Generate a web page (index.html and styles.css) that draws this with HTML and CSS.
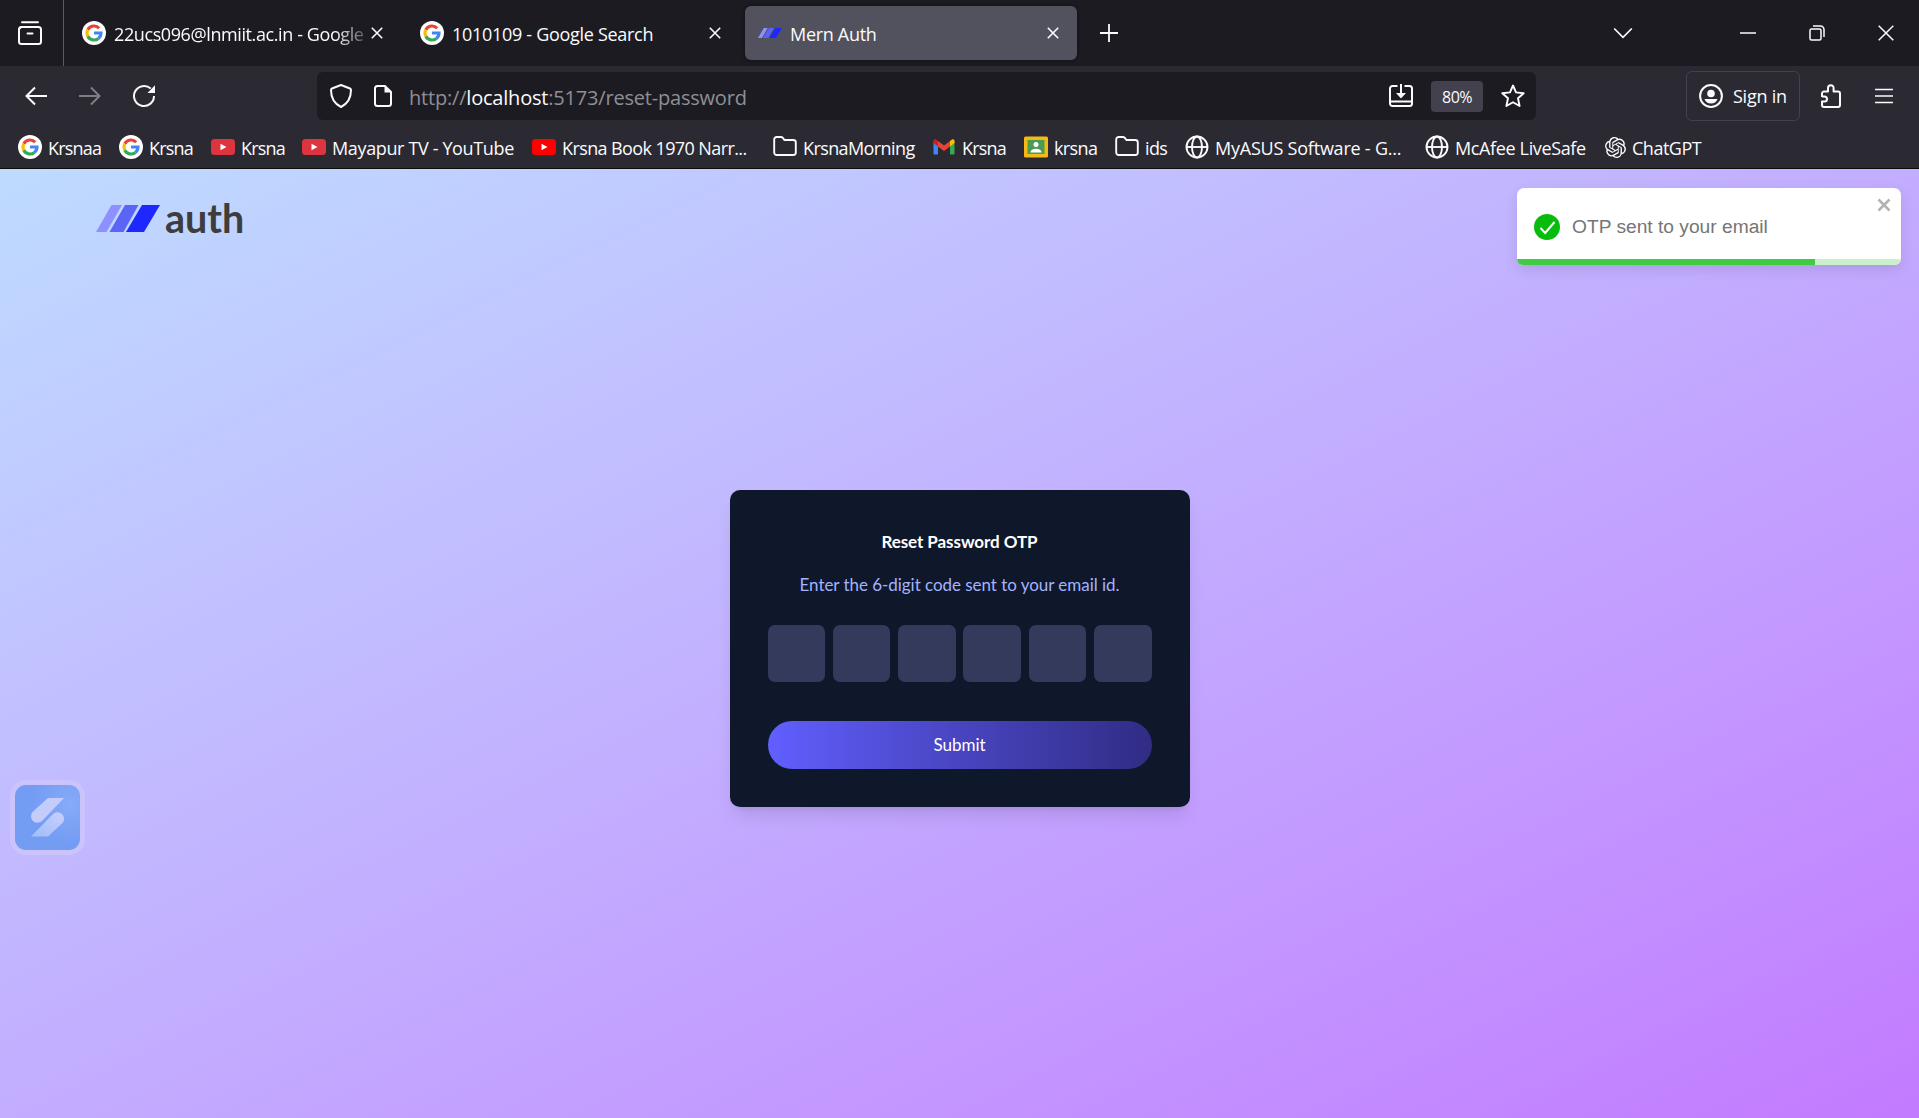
FILE: index.html
```html
<!DOCTYPE html>
<html lang="en">
<head>
<meta charset="utf-8">
<title>Mern Auth</title>
<link rel="stylesheet" href="styles.css">
</head>
<body>
<svg class="defs" aria-hidden="true">
  <symbol id="google" viewBox="0 0 24 24"><circle cx="12" cy="12" r="12" fill="#fff"/><g fill="none" stroke-width="3.1"><path d="M17.2 7.2A7 7 0 0 0 5.8 8.8" stroke="#ea4335"/><path d="M5.8 8.8a7 7 0 0 0 0 6.4" stroke="#fbbc05"/><path d="M5.8 15.2a7 7 0 0 0 10.6 2.3" stroke="#34a853"/><path d="M16.4 17.5A7 7 0 0 0 19 12h-7" stroke="#4285f4"/></g></symbol>
  <symbol id="youtube" viewBox="0 0 24 24"><rect y="4" width="24" height="16" rx="3.5" fill="currentColor"/><path d="M9.5 8.7v6.6l6-3.3z" fill="#fff"/></symbol>
  <symbol id="folder" viewBox="0 0 24 24"><path d="M1.2 17.500v-13a2.500 2.500 0 0 1 2.500-2.500h4.200c.8 0 1.400.3 1.900.9L11.500 5h8.800a2.500 2.500 0 0 1 2.500 2.500v10a2.500 2.500 0 0 1-2.500 2.500H3.700a2.500 2.500 0 0 1-2.500-2.500z" fill="none" stroke="currentColor" stroke-width="1.900"/></symbol>
  <symbol id="globe" viewBox="0 0 24 24"><g fill="none" stroke="currentColor" stroke-width="1.900"><circle cx="12" cy="12" r="10.500"/><ellipse cx="12" cy="12" rx="5" ry="10.500"/><path d="M1.500 12h21"/></g></symbol>
  <symbol id="close" viewBox="0 0 12 12"><path d="M.8.8l10.400 10.400M11.200.8L.8 11.200" stroke="currentColor" stroke-width="1.600"/></symbol>
  <symbol id="mark" viewBox="0 0 64 27"><path d="M15.500 0H26L10.500 27H0z" fill="#8f90ff"/><path d="M29 0h13.500L27.500 27h-14z" fill="#5c64f7"/><path d="M46 0h18L48 27H30z" fill="#1f27ff"/></symbol>
</svg>

<header class="browser">
  <div class="tabbar">
    <div class="view"><svg width="24" height="24" viewBox="0 0 24 24"><g fill="none" stroke="currentColor" stroke-width="2" stroke-linecap="round"><path d="M4 1.200h16"/><rect x="1" y="6" width="22" height="17" rx="2.500"/><path d="M9.500 12.500h5"/><path d="M1.500 7.500Q2 6 4 6"/></g></svg></div>
    <div class="tab"><svg class="icon"><use href="#google"/></svg><span class="name t1">22ucs096@lnmiit.ac.in - Google</span><svg class="x"><use href="#close"/></svg></div>
    <div class="tab"><svg class="icon"><use href="#google"/></svg><span class="name t2">1010109 - Google Search</span><svg class="x"><use href="#close"/></svg></div>
    <div class="tab active"><svg class="icon"><use href="#mark"/></svg><span class="name t3">Mern Auth</span><svg class="x"><use href="#close"/></svg></div>
    <svg class="plus" width="20" height="20" viewBox="0 0 20 20"><path d="M10 1v18M1 10h18" stroke="currentColor" stroke-width="1.800"/></svg>
    <div class="window">
      <svg width="20" height="12" viewBox="0 0 20 12"><path d="M1.200 1.500L10 10.300l8.800-8.800" fill="none" stroke="currentColor" stroke-width="1.700"/></svg>
      <svg width="16" height="16" viewBox="0 0 16 16"><path d="M0 8h16" stroke="currentColor" stroke-width="1.500"/></svg>
      <svg width="16" height="16" viewBox="0 0 16 16"><g fill="none" stroke="currentColor" stroke-width="1.500"><rect x="1" y="4" width="11" height="11" rx="1.500"/><path d="M4 1h7.500A3.500 3.500 0 0 1 15 4.500V12"/></g></svg>
      <svg width="16" height="16" viewBox="0 0 16 16"><path d="M.7.7l14.600 14.600M15.300.7L.7 15.300" stroke="currentColor" stroke-width="1.500"/></svg>
    </div>
  </div>

  <div class="navbar">
    <div class="history">
      <svg width="24" height="24" viewBox="0 0 24 24"><path d="M23 12H2.500M11 3.500L2.500 12l8.500 8.500" fill="none" stroke="currentColor" stroke-width="2"/></svg>
      <svg class="off" width="24" height="24" viewBox="0 0 24 24"><path d="M1 12h20.500M13 3.500l8.500 8.500-8.500 8.500" fill="none" stroke="currentColor" stroke-width="2"/></svg>
      <svg width="24" height="24" viewBox="0 0 24 24"><path d="M22 12a10 10 0 1 1-3.300-7.400" fill="none" stroke="currentColor" stroke-width="2"/><path d="M23 1.200V9h-7.500z" fill="currentColor"/></svg>
    </div>
    <div class="urlbar">
      <svg width="24" height="24" viewBox="0 0 24 24"><path d="M12 1l9 3.500c.8.300 1 .8 1 1.500 0 7-3 13.500-10 17C5 19.500 2 13 2 6c0-.7.200-1.200 1-1.500z" fill="none" stroke="currentColor" stroke-width="2" stroke-linejoin="round"/></svg>
      <svg class="page-icon" width="20" height="24" viewBox="0 0 20 24"><path d="M12 2H4.500A2.500 2.500 0 0 0 2 4.500v15A2.500 2.500 0 0 0 4.500 22h11a2.500 2.500 0 0 0 2.500-2.500V8z" fill="none" stroke="currentColor" stroke-width="2"/><path d="M11.500 1.500l7 7h-7z" fill="currentColor"/></svg>
      <span class="url">http://<b>localhost</b>:5173/reset-password</span>
      <svg width="24" height="24" viewBox="0 0 24 24"><g fill="none" stroke="currentColor" stroke-width="2"><path d="M8.500 2H3.500A2.500 2.500 0 0 0 1 4.500v15A2.500 2.500 0 0 0 3.500 22h17a2.500 2.500 0 0 0 2.500-2.500v-15A2.500 2.500 0 0 0 20.500 2h-5M12 0v12M1 17.500h22"/></g><path d="M7 9h10l-5 5.500z" fill="currentColor"/></svg>
      <span class="zoom">80%</span>
      <svg width="24" height="24" viewBox="0 0 24 24"><path d="M12 1.500l3 6.900 7.700.8-5.700 5.100 1.600 7.700L12 18.200 5.400 22 7 14.300 1.300 9.200 9 8.400z" fill="none" stroke="currentColor" stroke-width="1.900" stroke-linejoin="round"/></svg>
    </div>
    <div class="signin"><svg width="24" height="24" viewBox="0 0 24 24"><circle cx="12" cy="12" r="10.900" fill="none" stroke="currentColor" stroke-width="2"/><circle cx="12" cy="9.500" r="3.800" fill="currentColor"/><path d="M5.500 15h13c-1 3-3.500 4.500-6.500 4.500S6.500 18 5.500 15z" fill="currentColor"/></svg><span>Sign in</span></div>
    <svg class="ext" width="22" height="24" viewBox="0 0 22 24"><path d="M2 13V9.500A2 2 0 0 1 4 7.500h4V4a2.800 2.800 0 0 1 5.600 0v3.500H18a2 2 0 0 1 2 2V21a2 2 0 0 1-2 2H4a2 2 0 0 1-2-2v-3.500h2.500a2.500 2.500 0 0 0 0-5H2" fill="none" stroke="currentColor" stroke-width="2" stroke-linejoin="round"/></svg>
    <svg class="menu" width="18" height="16" viewBox="0 0 18 16"><path d="M0 1.500h18M0 8h18M0 14.500h18" stroke="currentColor" stroke-width="1.700"/></svg>
  </div>

  <nav class="bookmarks">
    <a><svg class="icon"><use href="#google"/></svg><span class="tight">Krsnaa</span></a>
    <a><svg class="icon"><use href="#google"/></svg><span class="tight">Krsna</span></a>
    <a><svg class="icon soft"><use href="#youtube"/></svg><span class="tight">Krsna</span></a>
    <a><svg class="icon soft"><use href="#youtube"/></svg><span>Mayapur TV - YouTube</span></a>
    <a><svg class="icon red"><use href="#youtube"/></svg><span class="snug">Krsna Book 1970 Narr...</span></a>
    <a><svg class="icon"><use href="#folder"/></svg><span class="snug">KrsnaMorning</span></a>
    <a><svg class="icon" viewBox="0 0 24 24"><path d="M1.500 6v13.500H6V10z" fill="#4285f4"/><path d="M22.500 6v13.500H18V10z" fill="#34a853"/><path d="M18 6l2-1.500c1.200-.8 2.500 0 2.500 1.500v2L18 11.500z" fill="#fbbc04"/><path d="M1.500 8V6C1.500 4.500 2.800 3.700 4 4.500L6 6v5.500z" fill="#c5221f"/><path d="M6 6l6 4.500L18 6v5.500L12 16l-6-4.500z" fill="#ea4335"/></svg><span class="tight">Krsna</span></a>
    <a><svg class="icon" viewBox="0 0 24 24"><rect y="1.500" width="24" height="21" rx="1.500" fill="#f5ba15"/><rect x="3.500" y="5" width="17" height="14" fill="#4a9c55"/><circle cx="12" cy="9.500" r="2.500" fill="#fff"/><path d="M6.500 17.500c0-5 11-5 11 0z" fill="#fff"/></svg><span class="snug">krsna</span></a>
    <a><svg class="icon"><use href="#folder"/></svg><span class="snug">ids</span></a>
    <a><svg class="icon"><use href="#globe"/></svg><span class="wide">MyASUS Software - G...</span></a>
    <a><svg class="icon"><use href="#globe"/></svg><span>McAfee LiveSafe</span></a>
    <a><svg class="icon gpt" viewBox="0 0 24 24"><path fill="currentColor" d="M22.2819 9.8211a5.9847 5.9847 0 0 0-.5157-4.9108 6.0462 6.0462 0 0 0-6.5098-2.9A6.0651 6.0651 0 0 0 4.9807 4.1818a5.9847 5.9847 0 0 0-3.9977 2.9 6.0462 6.0462 0 0 0 .7427 7.0966 5.98 5.98 0 0 0 .511 4.9107 6.051 6.051 0 0 0 6.5146 2.9001A5.9847 5.9847 0 0 0 13.2599 24a6.0557 6.0557 0 0 0 5.7718-4.2058 5.9894 5.9894 0 0 0 3.9977-2.9001 6.0557 6.0557 0 0 0-.7475-7.073zm-9.022 12.6081a4.4755 4.4755 0 0 1-2.8764-1.0408l.1419-.0804 4.7783-2.7582a.7948.7948 0 0 0 .3927-.6813v-6.7369l2.02 1.1686a.071.071 0 0 1 .038.052v5.5826a4.504 4.504 0 0 1-4.4945 4.4944zm-9.6607-4.1254a4.4708 4.4708 0 0 1-.5346-3.0137l.142.0852 4.783 2.7582a.7712.7712 0 0 0 .7806 0l5.8428-3.3685v2.3324a.0804.0804 0 0 1-.0332.0615L9.74 19.9502a4.4992 4.4992 0 0 1-6.1408-1.6464zM2.3408 7.8956a4.485 4.485 0 0 1 2.3655-1.9728V11.6a.7664.7664 0 0 0 .3879.6765l5.8144 3.3543-2.0201 1.1685a.0757.0757 0 0 1-.071 0l-4.8303-2.7865A4.504 4.504 0 0 1 2.3408 7.872zm16.5963 3.8558L13.1038 8.364 15.1192 7.2a.0757.0757 0 0 1 .071 0l4.8303 2.7913a4.4944 4.4944 0 0 1-.6765 8.1042v-5.6772a.79.79 0 0 0-.407-.667zm2.0107-3.0231l-.142-.0852-4.7735-2.7818a.7759.7759 0 0 0-.7854 0L9.409 9.2297V6.8974a.0662.0662 0 0 1 .0284-.0615l4.8303-2.7866a4.4992 4.4992 0 0 1 6.6802 4.66zM8.3065 12.863l-2.02-1.1638a.0804.0804 0 0 1-.038-.0567V6.0742a4.4992 4.4992 0 0 1 7.3757-3.4537l-.142.0805L8.704 5.459a.7948.7948 0 0 0-.3927.6813zm1.0976-2.3654l2.602-1.4998 2.6069 1.4998v2.9994l-2.5974 1.4997-2.6067-1.4997Z"/></svg><span class="last">ChatGPT</span></a>
  </nav>
</header>

<main class="page">
  <div class="logo"><svg width="64" height="27"><use href="#mark"/></svg><span>auth</span></div>

  <form class="card">
    <h1>Reset Password OTP</h1>
    <p>Enter the 6-digit code sent to your email id.</p>
    <div class="digits"><i></i><i></i><i></i><i></i><i></i><i></i></div>
    <button type="button">Submit</button>
  </form>

  <div class="toast">
    <svg width="26" height="26" viewBox="0 0 26 26"><circle cx="13" cy="13" r="13" fill="#07bc0c"/><path d="M6.500 14l4.700 5L20.500 8" fill="none" stroke="#fff" stroke-width="2"/></svg>
    <span>OTP sent to your email</span>
    <svg class="dismiss" width="14" height="14" viewBox="0 0 14 14"><path d="M1.500 1.500l11 11M12.500 1.500l-11 11" stroke="#b3b3b3" stroke-width="2.600"/></svg>
    <div class="progress"><div class="bar"></div></div>
  </div>

  <div class="widget"><svg width="65" height="65" viewBox="0 0 65 65"><defs><linearGradient id="s" x1="0" y1="1" x2="1" y2="0"><stop offset="0" stop-color="#9fbcf8"/><stop offset="1" stop-color="#c9cffd"/></linearGradient></defs><path d="M33 13h16L27.500 35.500A6.500 6.500 0 0 1 17.500 27z" fill="#c3ccfb"/><path d="M16 51.500L37.500 29.500a6.500 6.500 0 0 1 10 8.500L33 51.500z" fill="url(#s)"/></svg></div>
</main>
</body>
</html>
```
FILE: styles.css
```css
* { box-sizing: border-box; }

body {
  margin: 0;
  height: 1118px;
  display: flex;
  flex-direction: column;
  overflow: hidden;
  font-family: "Open Sans", "Noto Sans", sans-serif;
  color: #fbfbfe;
}

svg { display: block; flex: none; }
.defs { position: absolute; width: 0; height: 0; }
.icon { width: 24px; height: 24px; }

/* Browser chrome */
.browser {
  height: 169px;
  background: #2b2a33;
  border-bottom: 1px solid #0c0c0d;
  white-space: nowrap;
}

.tabbar {
  height: 66px;
  display: flex;
  align-items: center;
  background: #1c1b22;
}
.view {
  width: 64px;
  height: 66px;
  padding-left: 18px;
  margin-right: 5px;
  display: flex;
  align-items: center;
  border-right: 1px solid #5b5b61;
}
.tab {
  width: 332px;
  height: 54px;
  margin-right: 6px;
  padding: 0 18px 0 13px;
  display: flex;
  align-items: center;
  border-radius: 6px;
  font-size: 18px;
}
.tab .name { flex: 1; min-width: 0; margin: 0 6px 0 8px; padding-top: 1px; overflow: hidden; letter-spacing: -0.3px; }
.tab .t1 {
  letter-spacing: -0.4px;
  -webkit-mask-image: linear-gradient(to right, #000 88%, transparent 104%);
  mask-image: linear-gradient(to right, #000 88%, transparent 104%);
}
.tab.active { background: #52525e; box-shadow: 0 0 4px rgba(0, 0, 0, 0.5); }
.x { width: 12px; height: 12px; }
.plus { margin-left: 16px; }
.window {
  margin-left: auto;
  padding-right: 25px;
  display: flex;
  align-items: center;
  gap: 53px;
}
.window svg:first-child { margin-right: 54px; }

.navbar {
  height: 60px;
  padding-left: 24px;
  display: flex;
  align-items: center;
}
.history { display: flex; gap: 30px; width: 293px; }
.off { opacity: 0.4; }
.urlbar {
  width: 1219px;
  height: 48px;
  padding: 0 11px 0 12px;
  display: flex;
  align-items: center;
  border-radius: 6px;
  background: #1c1b22;
}
.page-icon { margin: 0 16px 0 20px; }
.url { flex: 1; padding-top: 2px; font-size: 20px; letter-spacing: -0.2px; color: #8f8f96; }
.url b { font-weight: 400; color: #fbfbfe; }
.zoom {
  width: 52px;
  height: 31px;
  margin: 0 18px;
  border-radius: 4px;
  background: #42414d;
  font-size: 16px;
  line-height: 32px;
  letter-spacing: -0.5px;
  text-align: center;
}
.signin {
  width: 114px;
  height: 50px;
  margin-left: 150px;
  padding-left: 12px;
  display: flex;
  align-items: center;
  gap: 10px;
  border: 1px solid #42414d;
  border-radius: 6px;
  font-size: 18px;
  letter-spacing: -0.25px;
}
.ext { margin-left: 20px; }
.menu { margin-left: 33px; }

.bookmarks {
  height: 42px;
  padding-left: 18px;
  display: grid;
  grid-template-columns: 101px 92px 91px 230px 241px 159px 92px 91px 70px 240px 180px 110px;
  align-items: center;
  font-size: 18px;
  letter-spacing: -0.36px;
}
.bookmarks a { display: flex; align-items: center; gap: 6px; }
.bookmarks span { padding-top: 1px; }
.tight { letter-spacing: -0.8px; }
.snug { letter-spacing: -0.6px; }
.wide { letter-spacing: -0.22px; }
.last { letter-spacing: -0.5px; }
.soft { color: #dc3540; }
.red { color: #f00; }
.gpt { width: 21px; height: 21px; }

/* Web page */
.page {
  position: relative;
  flex: 1;
  display: flex;
  flex-direction: column;
  align-items: center;
  background: linear-gradient(to bottom right in oklab, #bedbff, #c27aff);
}
.logo {
  align-self: flex-start;
  height: 48px;
  margin: 24px 0 0 96px;
  display: flex;
  align-items: center;
  gap: 5px;
  font: 700 39.500px/48px Lato, sans-serif;
  color: #3d3d3d;
}
.logo svg { margin-top: 3px; }
.logo span { padding-top: 1px; }

.card {
  width: 460px;
  height: 317px;
  margin-top: 249px;
  padding: 38px;
  border-radius: 10px;
  background: #0f172b;
  box-shadow: 0 12px 18px -4px rgba(0, 0, 0, 0.1), 0 5px 7px -5px rgba(0, 0, 0, 0.1);
  font-family: Lato, sans-serif;
  text-align: center;
}
.card h1 { margin: 0; font-size: 17px; line-height: 27px; font-weight: 700; letter-spacing: -0.07px; color: #fff; }
.card p { margin: 17px 0 0; font-size: 17px; line-height: 25px; letter-spacing: -0.04px; color: #a3b3ff; }
.digits { margin-top: 28px; display: flex; justify-content: space-between; }
.digits i { width: 57.600px; height: 57px; border-radius: 7px; background: #333a5c; }
.card button {
  width: 100%;
  height: 48px;
  margin-top: 39px;
  padding: 0;
  border: 0;
  border-radius: 24px;
  background: linear-gradient(to right in oklab, #615fff, #312c85);
  font: 400 17px/48px Lato, sans-serif;
  color: #fff;
}

.toast {
  position: absolute;
  top: 19px;
  right: 18px;
  width: 384px;
  height: 77px;
  padding: 0 17px;
  display: flex;
  align-items: center;
  gap: 12px;
  border-radius: 7px;
  background: #fff;
  box-shadow: 0 5px 14px rgba(0, 0, 0, 0.1);
  font: 19.200px "Liberation Sans", sans-serif;
  color: #757575;
}
.dismiss { position: absolute; top: 10px; right: 10px; }
.progress {
  position: absolute;
  inset: auto 0 0 0;
  height: 6px;
  overflow: hidden;
  border-radius: 0 0 7px 7px;
  background: #c9f2cb;
}
.bar { width: 77.600%; height: 6px; background: #40cb45; }

.widget {
  position: absolute;
  left: 10px;
  top: 611px;
  width: 75px;
  height: 75px;
  border: 5px solid #cbc3fb;
  border-radius: 16px;
  background: #cbc3fb;
}
.widget svg { border-radius: 11px; background: radial-gradient(circle at 85% 30%, #88aaf8, #739cf3 55%); }
```
